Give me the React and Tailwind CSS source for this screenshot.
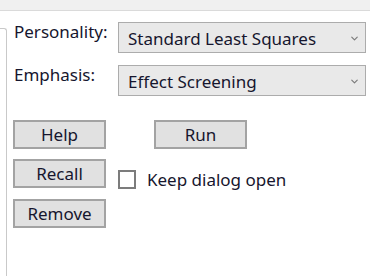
import { ChevronDown } from 'lucide-react'

function Dropdown({ value }) {
  return (
    <div className="w-[248px] h-[31px] flex items-center justify-between pl-[9px] pr-[5px] bg-[#e9e9e9] border border-[#acacac]">
      <span className="text-[17px] leading-none pt-[2px]">{value}</span>
      <ChevronDown size={11} strokeWidth={2.5} className="text-[#7a7a7a] mt-[1px]" />
    </div>
  )
}

function Btn({ children }) {
  return (
    <button className="w-[93px] h-[29px] flex items-center justify-center bg-[#e1e1e1] border-2 border-[#a3a3a3] text-[17px] leading-none">
      {children}
    </button>
  )
}

export default function App() {
  return (
    <div className="w-[370px] h-[276px] bg-white overflow-hidden flex flex-col font-['Noto_Sans',sans-serif] text-[#16162e]">
      <div className="h-[11px] shrink-0 bg-[#f0f0f0] border-b border-[#dadada]" />
      <div className="flex flex-1">
        {/* right edge of the neighbouring group box */}
        <div className="w-[7px] mt-[17px] border-t border-r border-[#c9c9c9] rounded-tr-[3px]" />
        <div className="flex-1 pl-[6px] pt-[11px]">
          <div className="flex items-start">
            <span className="w-[105px] pl-px text-[17px] leading-[19px]">Personality:</span>
            <Dropdown value="Standard Least Squares" />
          </div>
          <div className="flex items-start mt-[12px]">
            <span className="w-[105px] pl-px text-[17px] leading-[19px]">Emphasis:</span>
            <Dropdown value="Effect Screening" />
          </div>

          <div className="flex flex-col gap-[10px] mt-[24px]">
            <div className="flex items-start gap-[48px]">
              <Btn>Help</Btn>
              <Btn>Run</Btn>
            </div>
            <div className="flex items-start">
              <Btn>Recall</Btn>
              <label className="flex items-center ml-[12px] mt-[11px]">
                <span className="w-[18px] h-[19px] border-2 border-[#7c7c7c] bg-white" />
                <span className="ml-[11px] text-[17px] leading-none">Keep dialog open</span>
              </label>
            </div>
            <div className="flex">
              <Btn>Remove</Btn>
            </div>
          </div>
        </div>
      </div>
    </div>
  )
}
